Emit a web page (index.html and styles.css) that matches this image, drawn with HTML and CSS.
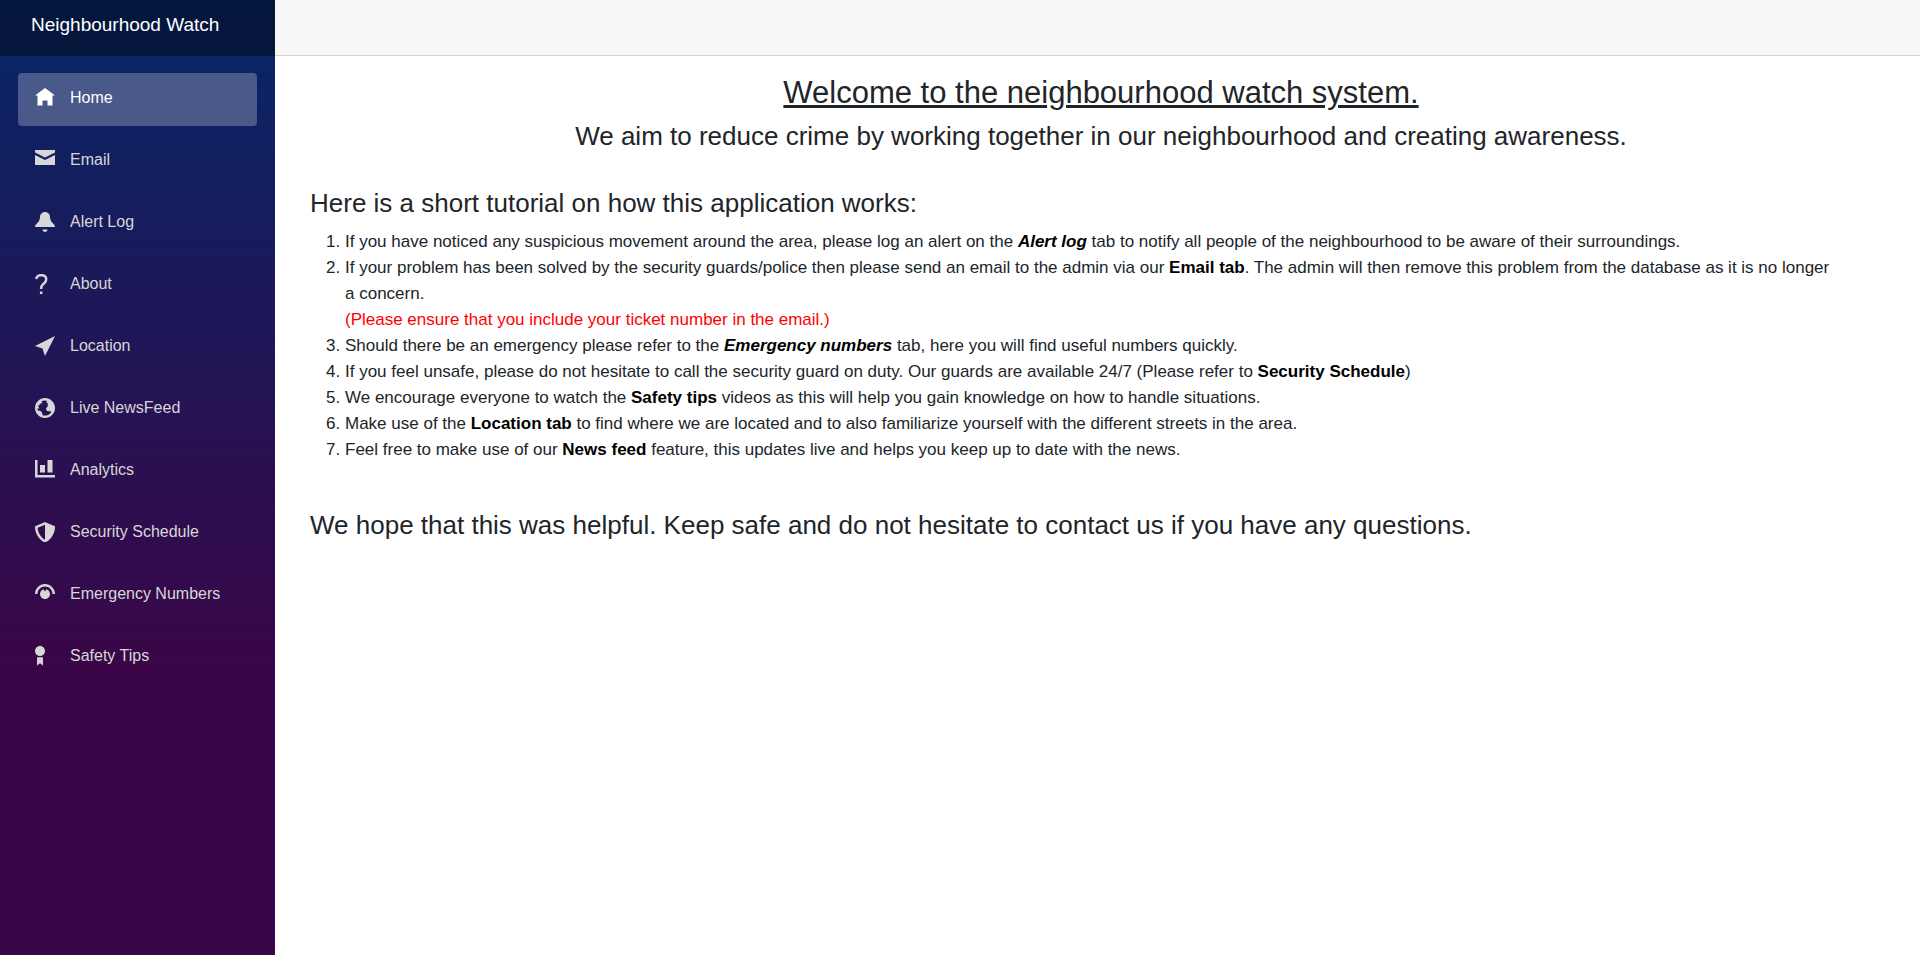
FILE: index.html
```html
<!DOCTYPE html>
<html lang="en">
<head>
<meta charset="utf-8">
<title>Neighbourhood Watch</title>
<link rel="stylesheet" href="styles.css">
</head>
<body>
<div class="app">
  <aside class="sidebar">
    <div class="brand-row"><a class="brand" href="#">Neighbourhood Watch</a></div>
    <nav class="nav">
      <a class="nav-link active" href="#"><svg class="icon" viewBox="0 0 8 8"><path d="M4 0l-4 3h1v4h2v-2h2v2h2v-4.03l1 .03-4-3z"/></svg>Home</a>
      <a class="nav-link" href="#"><svg class="icon" viewBox="0 0 8 8"><path d="M0 0v1l4 2 4-2v-1h-8zm0 2v4h8v-4l-4 2-4-2z"/></svg>Email</a>
      <a class="nav-link" href="#"><svg class="icon" viewBox="0 0 8 8"><path d="M4 0c-1.1 0-2 .9-2 2 0 1.04-.52 1.98-1.34 2.66-.41.34-.66.82-.66 1.34h8c0-.52-.24-1-.66-1.34-.82-.68-1.34-1.62-1.34-2.66 0-1.1-.89-2-2-2zm-1 7c0 .55.45 1 1 1s1-.45 1-1h-2z"/></svg>Alert Log</a>
      <a class="nav-link" href="#"><svg class="icon" viewBox="0 0 8 8"><path d="M2.47 0c-.85 0-1.48.26-1.88.66-.4.4-.54.9-.59 1.28l1 .13c.04-.25.12-.5.31-.69.19-.19.49-.38 1.16-.38.66 0 1.02.16 1.22.34.2.18.28.4.28.66 0 .83-.34 1.06-.84 1.5-.5.44-1.16 1.08-1.16 2.25v.25h1v-.25c0-.83.31-1.06.81-1.5.5-.44 1.19-1.08 1.19-2.25 0-.48-.17-1.02-.59-1.41-.43-.39-1.07-.59-1.91-.59zm-.5 7v1h1v-1h-1z"/></svg>About</a>
      <a class="nav-link" href="#"><svg class="icon" viewBox="0 0 8 8"><path d="M8 0l-8 4 3 1 1 3 4-8z"/></svg>Location</a>
      <a class="nav-link" href="#"><svg class="icon" viewBox="0 0 8 8"><path d="M4 0c-2.2 0-4 1.8-4 4s1.8 4 4 4 4-1.8 4-4-1.8-4-4-4zm0 1c.33 0 .64.09.94.19-.21.2-.45.38-.41.56.04.18.69.13.69.5 0 .27-.42.35-.13.66.35.35-.64.98-.66 1.44-.03.83.84.97 1.53.97.42 0 .53.2.5.44-.54.77-1.46 1.25-2.47 1.25-.38 0-.73-.09-1.06-.22.22-.44-.28-1.31-.75-1.59-.23-.23-.72-.14-1-.25-.09-.27-.18-.54-.19-.84.03-.05.08-.09.16-.09.19 0 .45.38.59.34.18-.04-.74-1.31-.31-1.56.2-.12.6.39.47-.16-.12-.51.36-.28.66-.41.26-.11.45-.41.13-.59-.06-.03-.13-.1-.22-.19.45-.27.97-.44 1.53-.44z"/></svg>Live NewsFeed</a>
      <a class="nav-link" href="#"><svg class="icon" viewBox="0 0 8 8"><path d="M0 0v7h8v-1h-7v-6h-1zm5 0v5h2v-5h-2zm-3 2v3h2v-3h-2z"/></svg>Analytics</a>
      <a class="nav-link" href="#"><svg class="icon" viewBox="0 0 8 8"><path d="M4 0l-.19.09-3.5 1.47-.31.13v.31c0 1.66.67 3.12 1.47 4.19.4.53.83.97 1.25 1.28.42.31.83.53 1.28.53.46 0 .86-.22 1.28-.53.42-.31.85-.75 1.25-1.28.8-1.07 1.47-2.53 1.47-4.19v-.31l-.31-.13-3.5-1.47-.19-.09zm0 1.09v5.91c-.04 0-.33-.07-.66-.31s-.71-.63-1.06-1.09c-.65-.87-1.15-2.05-1.23-3.28l2.95-1.23z"/></svg>Security Schedule</a>
      <a class="nav-link" href="#"><svg class="icon" viewBox="0 0 8 8"><path d="M4 0c-2.2 0-4 1.8-4 4h1c0-1.66 1.34-3 3-3s3 1.34 3 3h1c0-2.2-1.8-4-4-4zm-.59 2.09c-.81.25-1.41 1.01-1.41 1.91 0 1.11.9 2 2 2 1.11 0 2-.89 2-2 0-.9-.59-1.65-1.41-1.91l-.59.88-.59-.88z"/></svg>Emergency Numbers</a>
      <a class="nav-link" href="#"><svg class="icon" viewBox="0 0 8 8"><path d="M2 0c-1.1 0-2 .9-2 2s.9 2 2 2 2-.9 2-2-.9-2-2-2zm-1.19 4.5v3.3l1.19-.9 1.19.9v-3.3z"/></svg>Safety Tips</a>
    </nav>
  </aside>
  <div class="page">
    <header class="topbar"></header>
    <main class="content">
      <h3 class="title">Welcome to the neighbourhood watch system.</h3>
      <h4 class="subtitle">We aim to reduce crime by working together in our neighbourhood and creating awareness.</h4>
      <h4 class="section">Here is a short tutorial on how this application works:</h4>
      <ol class="steps">
        <li>If you have noticed any suspicious movement around the area, please log an alert on the <b><i>Alert log</i></b> tab to notify all people of the neighbourhood to be aware of their surroundings.</li>
        <li>If your problem has been solved by the security guards/police then please send an email to the admin via our <b>Email tab</b>. The admin will then remove this problem from the database as it is no longer a&nbsp;concern.<p class="note">(Please ensure that you include your ticket number in the email.)</p></li>
        <li>Should there be an emergency please refer to the <b><i>Emergency numbers</i></b> tab, here you will find useful numbers quickly.</li>
        <li>If you feel unsafe, please do not hesitate to call the security guard on duty. Our guards are available 24/7 (Please refer to <b>Security Schedule</b>)</li>
        <li>We encourage everyone to watch the <b>Safety tips</b> videos as this will help you gain knowledge on how to handle situations.</li>
        <li>Make use of the <b>Location tab</b> to find where we are located and to also familiarize yourself with the different streets in the area.</li>
        <li>Feel free to make use of our <b>News feed</b> feature, this updates live and helps you keep up to date with the news.</li>
      </ol>
      <h4 class="closing">We hope that this was helpful. Keep safe and do not hesitate to contact us if you have any questions.</h4>
    </main>
  </div>
</div>
</body>
</html>
```
FILE: styles.css
```css
* { box-sizing: border-box; }
body { margin: 0; font-family: "Liberation Sans", Arial, sans-serif; font-size: 16px; line-height: 24px; color: #212529; background: #fff; }
.app { display: flex; min-height: 100vh; }
.sidebar { width: 275px; flex-shrink: 0; background: linear-gradient(180deg, #052767 0%, #3a0647 70%); }
.brand-row { height: 56px; padding: 10px 31px; background: rgba(0, 0, 0, 0.4); }
.brand { color: #fff; font-size: 19px; line-height: 30px; text-decoration: none; }
.nav { display: flex; flex-direction: column; gap: 9px; padding: 17px 18px; }
.nav-link { display: flex; align-items: center; height: 53px; padding: 0 17px 4px; border-radius: 4px; color: #d7d7d7; font-size: 16px; text-decoration: none; }
.nav-link.active { background: rgba(255, 255, 255, 0.25); color: #fff; }
.icon { width: 20px; height: 20px; margin-right: 15px; fill: currentColor; }
.page { flex: 1; min-width: 0; }
.topbar { height: 56px; background: #f7f7f7; border-bottom: 1px solid #d6d5d5; }
.content { padding: 18px 28px 18px 35px; }
h3, h4, p { margin: 0; font-weight: 400; }
.title { font-size: 31px; line-height: 37px; text-align: center; text-decoration: underline; text-decoration-thickness: 3px; }
.subtitle { margin-top: 9px; font-size: 26px; line-height: 32px; text-align: center; }
.section { margin-top: 35px; font-size: 26px; line-height: 32px; }
.steps { margin: 10px 0 0; padding-left: 35px; font-size: 17px; line-height: 26px; }
.steps b { color: #000; }
.note { color: red; }
.closing { margin-top: 46px; font-size: 26px; line-height: 32px; }
```
